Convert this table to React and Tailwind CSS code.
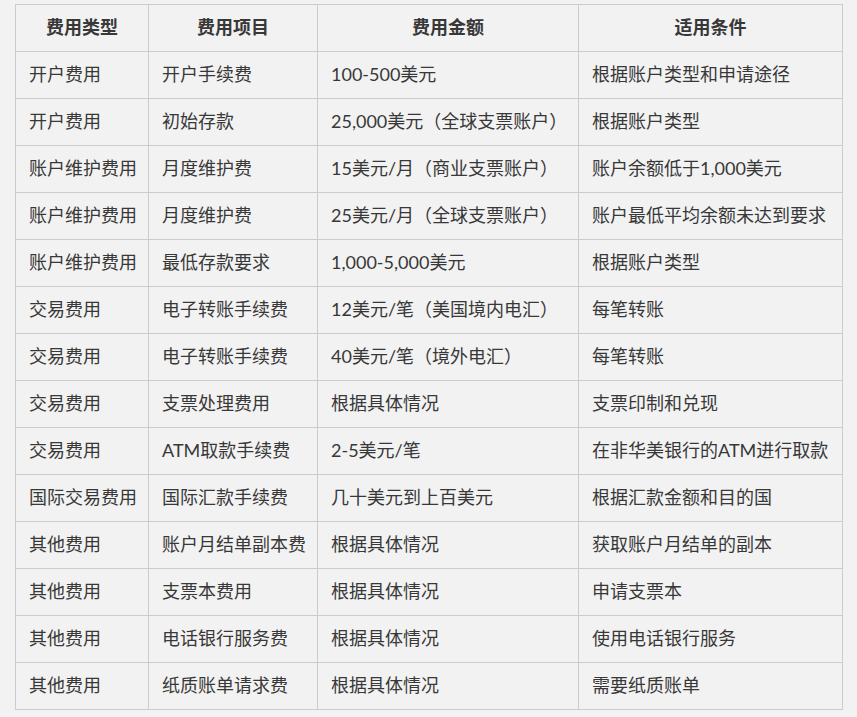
import React from "react";

const rows = [
  ["开户费用", "开户手续费", "100-500美元", "根据账户类型和申请途径"],
  ["开户费用", "初始存款", "25,000美元（全球支票账户）", "根据账户类型"],
  ["账户维护费用", "月度维护费", "15美元/月（商业支票账户）", "账户余额低于1,000美元"],
  ["账户维护费用", "月度维护费", "25美元/月（全球支票账户）", "账户最低平均余额未达到要求"],
  ["账户维护费用", "最低存款要求", "1,000-5,000美元", "根据账户类型"],
  ["交易费用", "电子转账手续费", "12美元/笔（美国境内电汇）", "每笔转账"],
  ["交易费用", "电子转账手续费", "40美元/笔（境外电汇）", "每笔转账"],
  ["交易费用", "支票处理费用", "根据具体情况", "支票印制和兑现"],
  ["交易费用", "ATM取款手续费", "2-5美元/笔", "在非华美银行的ATM进行取款"],
  ["国际交易费用", "国际汇款手续费", "几十美元到上百美元", "根据汇款金额和目的国"],
  ["其他费用", "账户月结单副本费", "根据具体情况", "获取账户月结单的副本"],
  ["其他费用", "支票本费用", "根据具体情况", "申请支票本"],
  ["其他费用", "电话银行服务费", "根据具体情况", "使用电话银行服务"],
  ["其他费用", "纸质账单请求费", "根据具体情况", "需要纸质账单"],
];

const headers = ["费用类型", "费用项目", "费用金额", "适用条件"];

export default function App() {
  return (
    <div
      className="min-h-screen bg-[#f2f2f2] pt-[4px] px-[15px] text-[#383838]"
      style={{ fontFamily: "Lato, 'Noto Sans CJK SC', sans-serif" }}
    >
      <table className="w-[827px] table-fixed border-collapse text-[18px] leading-6">
        <colgroup>
          <col className="w-[133px]" />
          <col className="w-[169px]" />
          <col className="w-[261px]" />
          <col className="w-[264px]" />
        </colgroup>
        <thead>
          <tr>
            {headers.map((h) => (
              <th
                key={h}
                className="border border-[#cccccc] px-[13px] pt-[10px] pb-[12px] text-center font-bold"
              >
                {h}
              </th>
            ))}
          </tr>
        </thead>
        <tbody>
          {rows.map((r, i) => (
            <tr key={i}>
              {r.map((c, j) => (
                <td
                  key={j}
                  className="border border-[#cccccc] px-[13px] pt-[10px] pb-[12px] text-left whitespace-nowrap"
                >
                  {c}
                </td>
              ))}
            </tr>
          ))}
        </tbody>
      </table>
    </div>
  );
}
